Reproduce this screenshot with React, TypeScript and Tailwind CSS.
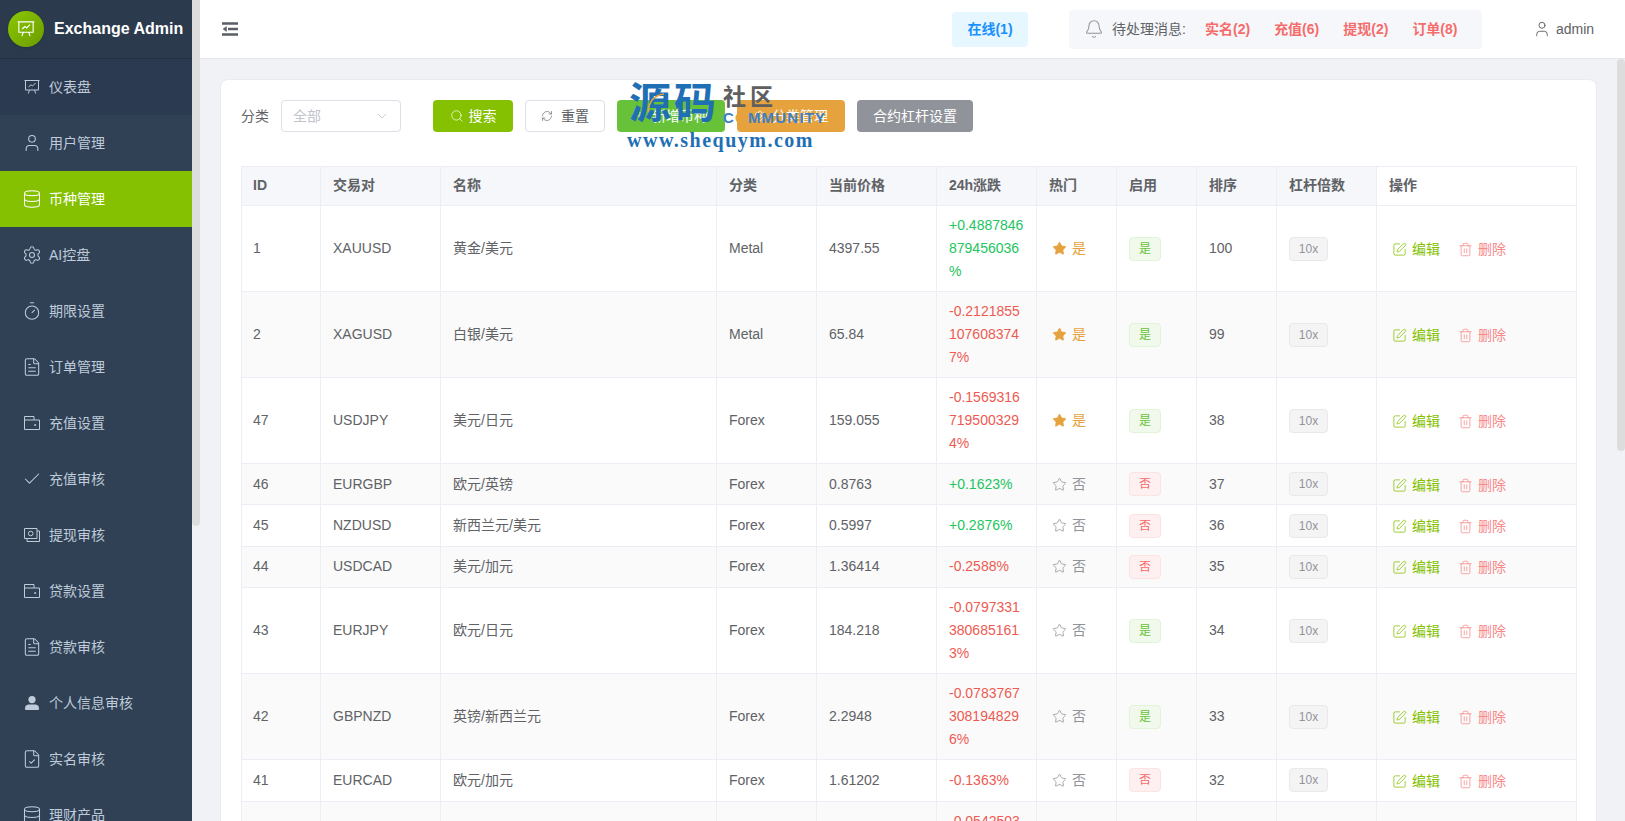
import React from 'react';
import {
  Bell,
  Check,
  ChevronDown,
  Database,
  FileCheck,
  FileText,
  Plus,
  RefreshCw,
  Search,
  Settings,
  SquarePen,
  Star,
  Timer,
  Trash2,
  User,
} from 'lucide-react';

type IconProps = { className?: string };

const BoardIcon = ({ className }: IconProps) => (
  <svg viewBox="-2 -2 20 20" fill="none" stroke="currentColor" strokeWidth="1" className={className}>
    <path d="M0.5 1.5h15M1.5 1.5v9.5h13V1.5M5.5 11l-1.2 3.5M10.5 11l1.2 3.5" />
    <path d="M4.5 8l2.5-2.2 1.6 1.2 3-3" />
  </svg>
);

const WalletIcon = ({ className }: IconProps) => (
  <svg viewBox="-2 -2 20 20" fill="none" stroke="currentColor" strokeWidth="1" className={className}>
    <path d="M0.5 5V1.5h9.5V5M0.5 5v9.5h15V5H0.5" />
    <circle cx="11.2" cy="10" r="0.6" fill="currentColor" />
  </svg>
);

const MoneyIcon = ({ className }: IconProps) => (
  <svg viewBox="-2 -2 20 20" fill="none" stroke="currentColor" strokeWidth="1" className={className}>
    <path d="M0.5 1.5h12.5v10H0.5zM3 11.5v3h12.5V4H13" />
    <circle cx="6.7" cy="6.5" r="2.3" />
  </svg>
);

const UserSolidIcon = ({ className }: IconProps) => (
  <svg viewBox="-2 -2 20 20" fill="currentColor" className={className}>
    <circle cx="8" cy="4.6" r="3.6" />
    <path d="M1 13.2c0-2.4 2-3.7 3.6-3.7h6.8c1.6 0 3.6 1.3 3.6 3.7v.5c0 .7-.5 1.3-1.3 1.3H2.3c-.8 0-1.3-.6-1.3-1.3z" />
  </svg>
);

const FoldIcon = ({ className }: IconProps) => (
  <svg viewBox="0 0 16 14" fill="none" stroke="currentColor" className={className}>
    <path d="M0 1.5h16M6 7h10M0 12.5h16" strokeWidth="2.4" />
    <path d="M4.5 4.6L1 7l3.5 2.4z" fill="currentColor" strokeWidth="0.5" />
  </svg>
);

const menuItems = [
  { label: '仪表盘', icon: BoardIcon, bg: 'bg-[#2b3a50]' },
  { label: '用户管理', icon: User },
  { label: '币种管理', icon: Database, active: true },
  { label: 'AI控盘', icon: Settings },
  { label: '期限设置', icon: Timer },
  { label: '订单管理', icon: FileText },
  { label: '充值设置', icon: WalletIcon },
  { label: '充值审核', icon: Check },
  { label: '提现审核', icon: MoneyIcon },
  { label: '贷款设置', icon: WalletIcon },
  { label: '贷款审核', icon: FileText },
  { label: '个人信息审核', icon: UserSolidIcon },
  { label: '实名审核', icon: FileCheck },
  { label: '理财产品', icon: Database },
];

const rows = [
  { id: 1, pair: 'XAUUSD', name: '黄金/美元', cat: 'Metal', price: '4397.55', change: '+0.4887846879456036', hot: true, on: true, sort: 100 },
  { id: 2, pair: 'XAGUSD', name: '白银/美元', cat: 'Metal', price: '65.84', change: '-0.21218551076083747', hot: true, on: true, sort: 99 },
  { id: 47, pair: 'USDJPY', name: '美元/日元', cat: 'Forex', price: '159.055', change: '-0.15693167195003294', hot: true, on: true, sort: 38 },
  { id: 46, pair: 'EURGBP', name: '欧元/英镑', cat: 'Forex', price: '0.8763', change: '+0.1623', hot: false, on: false, sort: 37 },
  { id: 45, pair: 'NZDUSD', name: '新西兰元/美元', cat: 'Forex', price: '0.5997', change: '+0.2876', hot: false, on: false, sort: 36 },
  { id: 44, pair: 'USDCAD', name: '美元/加元', cat: 'Forex', price: '1.36414', change: '-0.2588', hot: false, on: false, sort: 35 },
  { id: 43, pair: 'EURJPY', name: '欧元/日元', cat: 'Forex', price: '184.218', change: '-0.07973313806851613', hot: false, on: true, sort: 34 },
  { id: 42, pair: 'GBPNZD', name: '英镑/新西兰元', cat: 'Forex', price: '2.2948', change: '-0.07837673081948296', hot: false, on: true, sort: 33 },
  { id: 41, pair: 'EURCAD', name: '欧元/加元', cat: 'Forex', price: '1.61202', change: '-0.1363', hot: false, on: false, sort: 32 },
  { id: 40, pair: 'GBPCAD', name: '英镑/加元', cat: 'Forex', price: '1.8402', change: '-0.05425031234567890', hot: false, on: true, sort: 31 },
];

const columns = [
  { title: 'ID', width: 'w-[80px]' },
  { title: '交易对', width: 'w-[120px]' },
  { title: '名称', width: 'w-[276px]' },
  { title: '分类', width: 'w-[100px]' },
  { title: '当前价格', width: 'w-[120px]' },
  { title: '24h涨跌', width: 'w-[100px]' },
  { title: '热门', width: 'w-[80px]' },
  { title: '启用', width: 'w-[80px]' },
  { title: '排序', width: 'w-[80px]' },
  { title: '杠杆倍数', width: 'w-[100px]' },
  { title: '操作', width: 'w-[200px]' },
];

const Sidebar = () => (
  <aside className="flex w-[200px] shrink-0">
    <div className="flex w-[192px] flex-col bg-[#304156]">
      <div className="flex h-[59px] shrink-0 items-center border-b border-[#243240] bg-[#2b3a4d] pl-2">
        <div className="flex h-9 w-9 items-center justify-center rounded-full bg-gradient-to-br from-[#8cc800] to-[#6c9c00] shadow-sm">
          <BoardIcon className="h-[22px] w-[22px] text-white" />
        </div>
        <span className="ml-[10px] whitespace-nowrap text-[16px] font-bold text-white">Exchange Admin</span>
      </div>
      {menuItems.map(({ label, icon: Icon, active, bg }) => (
        <div
          key={label}
          className={`flex h-14 shrink-0 items-center pl-[22px] text-sm ${active ? 'bg-[#85c100] text-white' : `${bg ?? ''} text-[#bfcbd9]`}`}
        >
          <Icon className="h-5 w-5 shrink-0" strokeWidth={1.25} />
          <span className="ml-[7px]">{label}</span>
        </div>
      ))}
    </div>
    <div className="w-2 bg-[#f0f2f5]">
      <div className="h-[526px] rounded-b bg-[#dddddd]" />
    </div>
  </aside>
);

const Header = () => (
  <header className="flex h-[59px] shrink-0 items-center border-b border-[#e4e7ed] bg-white pl-[22px] text-sm">
    <FoldIcon className="h-[14px] w-4 text-[#5a5e66]" />
    <div className="ml-[714px] flex h-[35px] w-[76px] items-center justify-center rounded bg-[#e6f7ff] font-bold text-[#1890ff]">
      在线(1)
    </div>
    <div className="ml-[41px] flex h-[39px] w-[413px] items-center rounded bg-[#f5f7fa] pl-[15px] text-[#606266]">
      <Bell className="h-5 w-5 text-[#909399]" strokeWidth={1.25} />
      <span className="ml-2 w-[73px] overflow-hidden whitespace-nowrap">待处理消息:</span>
      <div className="ml-5 flex gap-6 font-bold text-[#f56c6c]">
        <span>实名(2)</span>
        <span>充值(6)</span>
        <span>提现(2)</span>
        <span>订单(8)</span>
      </div>
    </div>
    <div className="ml-[51px] flex items-center text-[#606266]">
      <User className="h-[18px] w-[18px]" strokeWidth={1.25} />
      <span className="ml-[5px]">admin</span>
    </div>
  </header>
);

const Toolbar = () => (
  <div className="flex h-8 items-center text-sm text-[#606266]">
    <span className="w-10">分类</span>
    <div className="flex h-8 w-[120px] items-center justify-between rounded border border-[#dcdfe6] pl-[11px] pr-[10px] text-[#c0c4cc]">
      <span>全部</span>
      <ChevronDown className="h-4 w-4" strokeWidth={1.25} />
    </div>
    <button className="ml-8 flex h-8 w-20 items-center justify-center rounded bg-[#85c100] text-white">
      <Search className="h-[14px] w-[14px]" strokeWidth={1.25} />
      <span className="ml-[5px]">搜索</span>
    </button>
    <button className="ml-3 flex h-8 w-20 items-center justify-center rounded border border-[#dcdfe6] bg-white text-[#606266]">
      <RefreshCw className="h-3 w-3" strokeWidth={1.25} />
      <span className="ml-2">重置</span>
    </button>
    <button className="ml-3 flex h-8 w-[108px] items-center justify-center rounded bg-[#67c23a] text-white">
      <Plus className="h-3 w-3" strokeWidth={1.5} />
      <span className="ml-[6px]">新增币种</span>
    </button>
    <button className="ml-3 flex h-8 w-[108px] items-center justify-center rounded bg-[#e6a23c] text-white">
      <Settings className="h-3 w-3" strokeWidth={1.5} />
      <span className="ml-[6px]">分类管理</span>
    </button>
    <button className="ml-3 flex h-8 w-[116px] items-center justify-center rounded bg-[#909399] text-white">
      合约杠杆设置
    </button>
  </div>
);

const CoinTable = () => (
  <table className="mt-[34px] w-[1336px] table-fixed border-separate border-spacing-0 text-sm text-[#606266]">
    <colgroup>
      {columns.map((c) => (
        <col key={c.title} className={c.width} />
      ))}
    </colgroup>
    <thead>
      <tr>
        {columns.map((c) => (
          <th
            key={c.title}
            className={`h-[40px] border-b border-r border-t border-[#ebeef5] px-3 pb-[2px] text-left font-bold first:border-l first:pl-[11px] ${c.title === '操作' ? 'bg-white' : 'bg-[#f5f7fa]'}`}
          >
            {c.title}
          </th>
        ))}
      </tr>
    </thead>
    <tbody>
      {rows.map((r, i) => {
        const cell = 'h-[41.4px] border-b border-r border-[#ebeef5] px-3 py-2 leading-[23px] first:border-l first:pl-[11px]';
        return (
          <tr key={r.id} className={i % 2 === 1 ? 'bg-[#fafafa]' : 'bg-white'}>
            <td className={cell}>{r.id}</td>
            <td className={cell}>{r.pair}</td>
            <td className={cell}>{r.name}</td>
            <td className={cell}>{r.cat}</td>
            <td className={cell}>{r.price}</td>
            <td className={`${cell} break-all ${r.change.startsWith('+') ? 'text-[#22c55e]' : 'text-[#ee5a52]'}`}>
              {r.change}
              <wbr />%
            </td>
            <td className={cell}>
              <div className={`flex h-6 items-center pl-[3px] ${r.hot ? 'text-[#e6a23c]' : 'text-[#909399]'}`}>
                <Star className="h-[15px] w-[15px]" strokeWidth={1.25} fill={r.hot ? 'currentColor' : 'none'} />
                <span className="ml-[5px]">{r.hot ? '是' : '否'}</span>
              </div>
            </td>
            <td className={cell}>
              <span
                className={`flex h-6 w-8 items-center justify-center rounded border text-xs ${r.on ? 'border-[#e1f3d8] bg-[#f0f9eb] text-[#67c23a]' : 'border-[#fde2e2] bg-[#fef0f0] text-[#f56c6c]'}`}
              >
                {r.on ? '是' : '否'}
              </span>
            </td>
            <td className={cell}>{r.sort}</td>
            <td className={cell}>
              <span className="flex h-6 w-[39px] items-center justify-center rounded border border-[#e9e9eb] bg-[#f4f4f5] text-xs text-[#909399]">
                10x
              </span>
            </td>
            <td className={cell}>
              <div className="flex h-6 items-center pl-[3px] pt-[2px]">
                <span className="flex items-center text-[#85c100]">
                  <SquarePen className="h-[15px] w-[15px]" strokeWidth={1.25} />
                  <span className="ml-[5px]">编辑</span>
                </span>
                <span className="ml-[18px] flex items-center text-[#f78989]">
                  <Trash2 className="h-[15px] w-[15px]" strokeWidth={1.25} />
                  <span className="ml-[5px]">删除</span>
                </span>
              </div>
            </td>
          </tr>
        );
      })}
    </tbody>
  </table>
);

const Watermark = () => (
  <div className="pointer-events-none absolute left-[627px] top-[80px] h-[72px] w-[200px]">
    <span className="absolute left-[2px] top-[-1px] whitespace-nowrap text-[42px] font-bold leading-[50px] tracking-[3px] text-[#1f6fb5]">
      源码
    </span>
    <svg viewBox="0 0 20 20" fill="none" stroke="#e6a23c" strokeWidth="1.5" className="absolute left-[18px] top-[13px] h-5 w-5">
      <path d="M19 1C10 2 4 8 3 19" />
    </svg>
    <span className="absolute left-[96px] top-[5px] whitespace-nowrap text-[23px] font-bold leading-[24px] tracking-[4px] text-[#5f5f5f]">
      社区
    </span>
    <span className="absolute left-[96px] top-[29px] whitespace-nowrap text-[15px] font-bold leading-[18px] tracking-[1.2px] text-[#3f7fc0]">
      C<span className="text-[#e6a23c]">O</span>MMUNITY
    </span>
    <span className="absolute left-0 top-[50px] whitespace-nowrap font-['Liberation_Serif',serif] text-[20px] font-bold leading-[20px] tracking-[1.5px] text-[#1f6fb5]">
      www.shequym.com
    </span>
  </div>
);

export default function App() {
  return (
    <div className="relative flex h-screen w-full overflow-hidden bg-[#f0f2f5] font-['Liberation_Sans','Noto_Sans_CJK_SC',sans-serif]">
      <Sidebar />
      <div className="flex min-w-0 flex-1 flex-col">
        <Header />
        <div className="flex min-h-0 flex-1">
          <main className="min-w-0 flex-1 overflow-hidden p-5">
            <div className="rounded-lg border border-[#e8ebf0] bg-white p-5">
              <Toolbar />
              <CoinTable />
            </div>
          </main>
          <div className="w-2 shrink-0 bg-[#f0f2f5]">
            <div className="h-[392px] rounded bg-[#dddddd]" />
          </div>
        </div>
      </div>
      <Watermark />
    </div>
  );
}
